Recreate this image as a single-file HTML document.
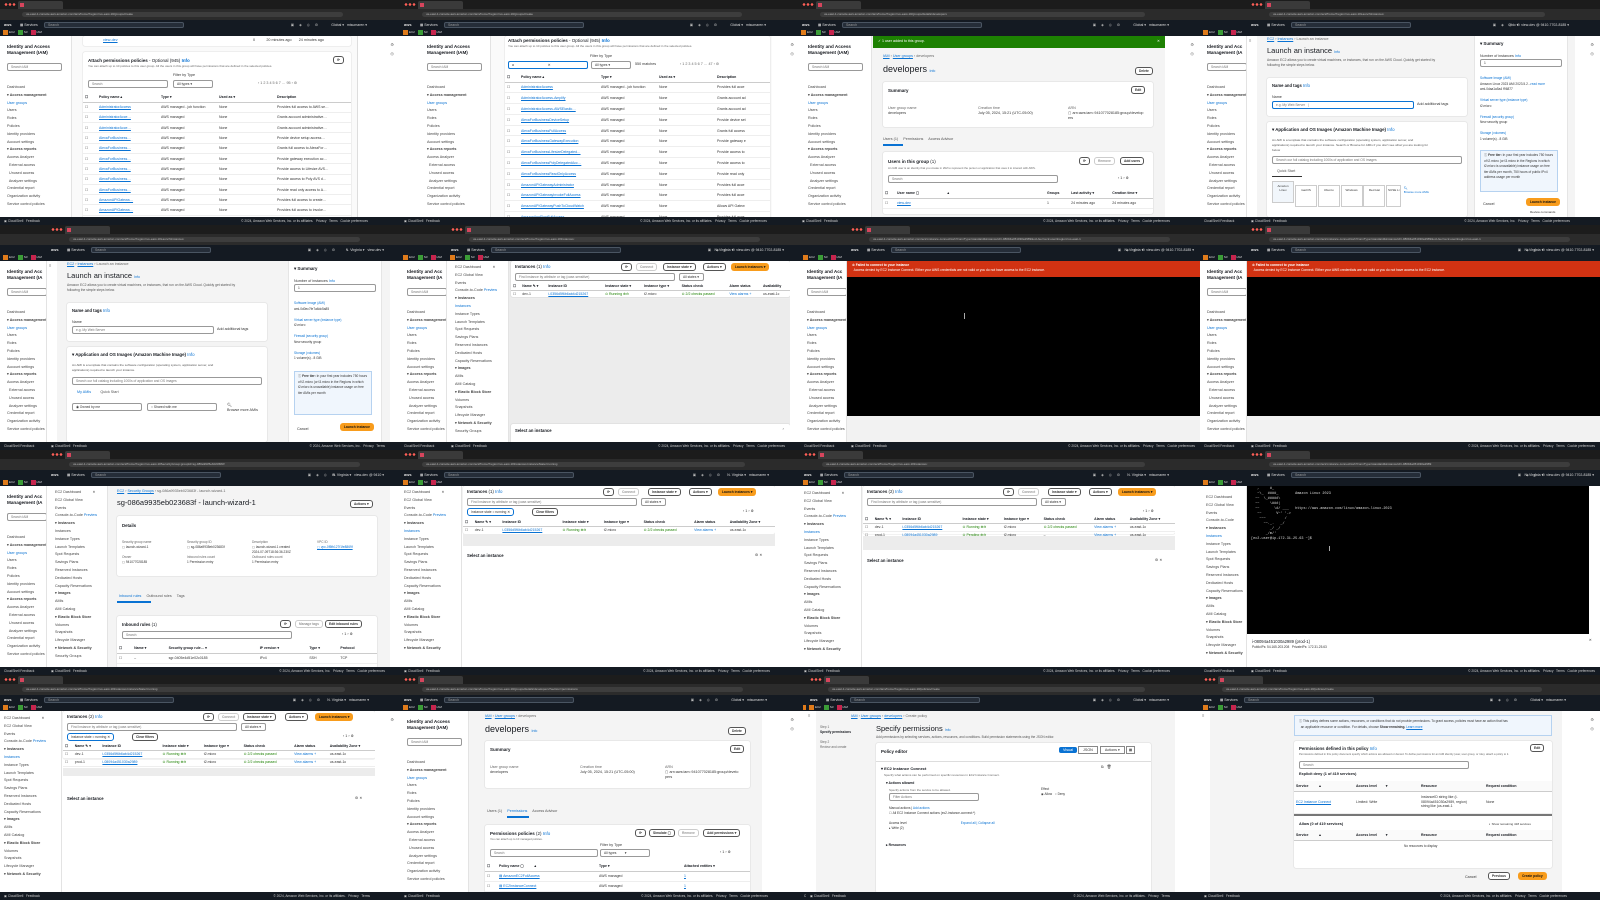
<!DOCTYPE html>
<html><head><meta charset="utf-8">
<style>
*{margin:0;padding:0;box-sizing:border-box}
body{width:1600px;height:900px;overflow:hidden;background:#0d0d0d;font-family:"Liberation Sans",sans-serif;position:relative}
.w{position:absolute;height:225px;overflow:hidden;background:#f4f4f4}
.tb{position:absolute;left:0;right:0;top:0;height:9px;background:#1c1c1c}
.tb .d{position:absolute;left:4px;top:3px;width:12px;height:3px;background:radial-gradient(circle,#ff5f57 1.2px,transparent 1.4px) 0 0/4px 3px repeat-x}
.tb .tab{position:absolute;left:18px;top:1px;width:45px;height:8px;background:#3a3a3a;border-radius:2px 2px 0 0}
.tb .tab:before{content:"";position:absolute;left:2px;top:2px;width:4px;height:4px;background:#d6455d}
.ad{position:absolute;left:0;right:0;top:9px;height:11px;background:#2b2b2b}
.ad .u{position:absolute;left:22px;top:3px;right:30px;height:5px;background:#3d3d3d;border-radius:3px;font-size:3px;color:#bbb;line-height:5px;padding-left:4px;white-space:nowrap;overflow:hidden}
.nv{position:absolute;left:0;right:0;top:20px;height:10px;background:#141a22;font-size:3.5px;color:#ddd;white-space:nowrap}
.nv .aws{position:absolute;left:4px;top:2px;font-weight:bold;font-size:4px}
.nv .sv{position:absolute;left:20px;top:3px}
.nv .se{position:absolute;left:44px;top:2px;width:140px;height:6px;background:#252d38;border:1px solid #4a5562;border-radius:2px;color:#999;padding-left:3px;line-height:4px}
.nv .rg{position:absolute;right:6px;top:3px}
.nv .ic{position:absolute;right:50px;top:3px;letter-spacing:5px;color:#bbb}
.fv{position:absolute;left:0;right:0;top:30px;height:6px;background:#141a22;font-size:3px;color:#ddd}
.fv i{display:inline-block;width:5px;height:5px;vertical-align:top;margin:0 1px 0 3px}
.o{background:#e07b1a}.g{background:#3b9c37}.r{background:#c7254e}
.ct{position:absolute;left:0;right:0;top:36px;bottom:8px;background:#f4f4f4;overflow:hidden}
.ft{position:absolute;left:0;right:0;bottom:0;height:8px;background:#141a22;font-size:3.2px;color:#ccc;line-height:8px;padding-left:4px;white-space:nowrap}
.ft span{position:absolute;right:5px}
.a{position:absolute}
.sb{position:absolute;left:0;top:0;bottom:0;background:#fff;border-right:1px solid #e3e3e3;font-size:3.7px;color:#444;white-space:nowrap;overflow:hidden}
.sbt{position:absolute;left:7px;top:8px;font-size:4.6px;font-weight:bold;color:#16191f;line-height:6px}
.sbs{position:absolute;left:7px;top:27px;width:55px;height:8px;border:1px solid #999;border-radius:2px;font-size:3.3px;color:#777;line-height:6px;padding-left:3px}
.sbl{position:absolute;left:7px;top:48px;line-height:7.8px}
.sbl2{position:absolute;left:6px;top:4px;line-height:7.8px}
.bl{color:#0972d3}
.p{position:absolute;background:#fff;border-radius:2px;box-shadow:0 0 1px #aaa}
.t{font-size:3.7px;color:#333;white-space:nowrap;line-height:5px}
.h{font-weight:bold;color:#16191f}
.lk{color:#0972d3;text-decoration:underline}
.bt{position:absolute;height:8px;border:1px solid #555;border-radius:3px;background:#fff;font-size:3.3px;line-height:6px;padding:0 3px;color:#333;font-weight:bold;white-space:nowrap}
.ob{position:absolute;height:8px;border-radius:3px;background:#f89c1c;font-size:3.3px;line-height:8px;padding:0 4px;color:#111;font-weight:bold;white-space:nowrap}
.in{position:absolute;height:8px;border:1px solid #999;border-radius:2px;background:#fff;font-size:3.3px;line-height:6px;padding-left:3px;color:#777;white-space:nowrap;overflow:hidden}
table{border-collapse:collapse;font-size:3.5px;color:#333;white-space:nowrap}
td{padding:0 2px;border-bottom:1px solid #eee;overflow:hidden}
.hd td{font-weight:bold;color:#16191f;border-bottom:1px solid #ccc}
.blk{background:#000}
.term{font-family:"Liberation Mono",monospace;font-size:3.5px;color:#ddd;white-space:pre;line-height:5px}
.ric{position:absolute;right:6px;top:4px;font-size:4px;color:#666;line-height:9px}
</style></head><body>

<!-- ============ BASE underlying windows ============ -->
<div class="w" style="left:0;top:0;width:400px"><div class="tb"></div><div class="ad"></div><div class="nv"></div><div class="fv"></div><div class="ct" style="background:#fff"><div class="ric">⚙<br>◎</div></div><div class="ft"></div></div>
<div class="w" style="left:400px;top:0;width:400px"><div class="tb"></div><div class="ad"></div><div class="nv"></div><div class="fv"></div><div class="ct" style="background:#fff"><div class="ric">⚙<br>◎</div></div><div class="ft"></div></div>
<div class="w" style="left:800px;top:0;width:400px"><div class="tb"></div><div class="ad"></div><div class="nv"></div><div class="fv"></div><div class="ct" style="background:#fff"><div class="ric">⚙<br>◎</div></div><div class="ft"></div></div>
<div class="w" style="left:400px;top:450px;width:400px"><div class="tb"></div><div class="ad"></div><div class="nv"></div><div class="fv"></div><div class="ct" style="background:#fff"></div><div class="ft"></div></div>
<div class="w" style="left:800px;top:450px;width:400px"><div class="tb"></div><div class="ad"></div><div class="nv"></div><div class="fv"></div><div class="ct" style="background:#fff"></div><div class="ft"></div></div>
<div class="w" style="left:0;top:675px;width:400px"><div class="tb"></div><div class="ad"></div><div class="nv"></div><div class="fv"></div><div class="ct" style="background:#fff"><div class="ric">⚙</div></div><div class="ft"></div></div>
<div class="w" style="left:400px;top:675px;width:400px"><div class="tb"></div><div class="ad"></div><div class="nv"></div><div class="fv"></div><div class="ct" style="background:#fff"><div class="ric">⚙<br>◎</div></div><div class="ft"></div></div>
<div class="w" style="left:1200px;top:675px;width:400px"><div class="tb"></div><div class="ad"></div><div class="nv"></div><div class="fv"></div><div class="ct" style="background:#fff"><div class="ric">⚙<br>◎</div></div><div class="ft"></div></div>

<div class="w" style="left:1200px;top:0;width:400px"><div class="tb"></div><div class="ad"></div><div class="nv"></div><div class="fv"><i class="o"></i>EC2<i class="g"></i>S3<i class="r"></i>IAM</div><div class="ct" style="background:#fff"><div class="sb" style="width:47px"><div class="sbt">Identity and Acc<br>Management (IA</div><div class="sbs" style="width:40px">Search IAM</div><div class="sbl">Dashboard<br><b>▾ Access management</b><br><span class="bl">User groups</span><br>Users<br>Roles<br>Policies<br>Identity providers<br>Account settings<br><b>▾ Access reports</b><br>Access Analyzer<br>&nbsp; External access<br>&nbsp; Unused access<br>&nbsp; Analyzer settings<br>Credential report<br>Organization activity<br>Service control policies</div></div><div class="ric">⚙<br>◎</div></div><div class="ft">CloudShell Feedback</div></div>

<div class="w" style="left:0;top:225px;width:400px"><div class="tb"></div><div class="ad"></div><div class="nv"></div><div class="fv"><i class="o"></i>EC2<i class="g"></i>S3<i class="r"></i>IAM</div><div class="ct" style="background:#fff"><div class="sb" style="width:47px"><div class="sbt">Identity and Acc<br>Management (IA</div><div class="sbs" style="width:40px">Search IAM</div><div class="sbl">Dashboard<br><b>▾ Access management</b><br><span class="bl">User groups</span><br>Users<br>Roles<br>Policies<br>Identity providers<br>Account settings<br><b>▾ Access reports</b><br>Access Analyzer<br>&nbsp; External access<br>&nbsp; Unused access<br>&nbsp; Analyzer settings<br>Credential report<br>Organization activity<br>Service control policies</div></div></div><div class="ft">CloudShell Feedback</div></div>

<div class="w" style="left:400px;top:225px;width:400px"><div class="tb"></div><div class="ad"></div><div class="nv"></div><div class="fv"><i class="o"></i>EC2<i class="g"></i>S3<i class="r"></i>IAM</div><div class="ct" style="background:#fff"><div class="sb" style="width:47px"><div class="sbt">Identity and Acc<br>Management (IA</div><div class="sbs" style="width:40px">Search IAM</div><div class="sbl">Dashboard<br><b>▾ Access management</b><br><span class="bl">User groups</span><br>Users<br>Roles<br>Policies<br>Identity providers<br>Account settings<br><b>▾ Access reports</b><br>Access Analyzer<br>&nbsp; External access<br>&nbsp; Unused access<br>&nbsp; Analyzer settings<br>Credential report<br>Organization activity<br>Service control policies</div></div></div><div class="ft">CloudShell Feedback</div></div>

<div class="w" style="left:800px;top:225px;width:400px"><div class="tb"></div><div class="ad"></div><div class="nv"></div><div class="fv"><i class="o"></i>EC2<i class="g"></i>S3<i class="r"></i>IAM</div><div class="ct" style="background:#fff"><div class="sb" style="width:47px"><div class="sbt">Identity and Acc<br>Management (IA</div><div class="sbs" style="width:40px">Search IAM</div><div class="sbl">Dashboard<br><b>▾ Access management</b><br><span class="bl">User groups</span><br>Users<br>Roles<br>Policies<br>Identity providers<br>Account settings<br><b>▾ Access reports</b><br>Access Analyzer<br>&nbsp; External access<br>&nbsp; Unused access<br>&nbsp; Analyzer settings<br>Credential report<br>Organization activity<br>Service control policies</div></div></div><div class="ft">CloudShell Feedback</div></div>

<div class="w" style="left:1200px;top:225px;width:400px"><div class="tb"></div><div class="ad"></div><div class="nv"></div><div class="fv"><i class="o"></i>EC2<i class="g"></i>S3<i class="r"></i>IAM</div><div class="ct" style="background:#fff"><div class="sb" style="width:47px"><div class="sbt">Identity and Acc<br>Management (IA</div><div class="sbs" style="width:40px">Search IAM</div><div class="sbl">Dashboard<br><b>▾ Access management</b><br><span class="bl">User groups</span><br>Users<br>Roles<br>Policies<br>Identity providers<br>Account settings<br><b>▾ Access reports</b><br>Access Analyzer<br>&nbsp; External access<br>&nbsp; Unused access<br>&nbsp; Analyzer settings<br>Credential report<br>Organization activity<br>Service control policies</div></div></div><div class="ft">CloudShell Feedback</div></div>

<div class="w" style="left:0;top:450px;width:400px"><div class="tb"></div><div class="ad"></div><div class="nv"></div><div class="fv"><i class="o"></i>EC2<i class="g"></i>S3<i class="r"></i>IAM</div><div class="ct" style="background:#fff"><div class="sb" style="width:47px"><div class="sbt">Identity and Acc<br>Management (IA</div><div class="sbs" style="width:40px">Search IAM</div><div class="sbl">Dashboard<br><b>▾ Access management</b><br><span class="bl">User groups</span><br>Users<br>Roles<br>Policies<br>Identity providers<br>Account settings<br><b>▾ Access reports</b><br>Access Analyzer<br>&nbsp; External access<br>&nbsp; Unused access<br>&nbsp; Analyzer settings<br>Credential report<br>Organization activity<br>Service control policies</div></div></div><div class="ft">CloudShell Feedback</div></div>

<div class="w" style="left:1200px;top:450px;width:400px"><div class="tb"></div><div class="ad"></div><div class="nv"></div><div class="fv"><i class="o"></i>EC2<i class="g"></i>S3<i class="r"></i>IAM</div><div class="ct" style="background:#fff"><div class="sb" style="width:47px"><div class="sbl2" style="top:8px">EC2 Dashboard<br>EC2 Global View<br>Events<br>Console-to-Code<br><b>▾ Instances</b><br><span class="bl">Instances</span><br>Instance Types<br>Launch Templates<br>Spot Requests<br>Savings Plans<br>Reserved Instances<br>Dedicated Hosts<br>Capacity Reservations<br><b>▾ Images</b><br>AMIs<br>AMI Catalog<br><b>▾ Elastic Block Store</b><br>Volumes<br>Snapshots<br>Lifecycle Manager<br><b>▾ Network &amp; Security</b></div></div></div><div class="ft">CloudShell Feedback</div></div>

<div class="w" style="left:800px;top:675px;width:400px"><div class="tb"></div><div class="ad"></div><div class="nv"></div><div class="fv"><i class="o"></i>EC2<i class="g"></i>S3<i class="r"></i>IAM</div><div class="ct" style="background:#fff"></div><div class="ft">CloudShell Feedback</div></div>

<!-- ============ ROW 1 ============ -->
<div class="w" style="left:0;top:0;width:373px">
<div class="tb"><div class="d"></div><div class="tab"></div></div><div class="ad"><div class="u">us-east-1.console.aws.amazon.com/iam/home?region=us-east-1#/groups/create</div></div>
<div class="nv"><span class="aws">aws</span><span class="sv">▦ Services</span><span class="se">Search</span><span class="ic">▣◈◎⚙</span><span class="rg">Global ▾ &nbsp; misumaren ▾</span></div>
<div class="fv"><i class="o"></i>EC2<i class="g"></i>S3<i class="r"></i>IAM</div>
<div class="ct" style="background:#fafafa">
<div class="sb" style="width:72px"><div class="sbt">Identity and Access<br>Management (IAM)</div><div class="sbs">Search IAM</div><div class="sbl">Dashboard<br><b>▾ Access management</b><br><span class="bl">User groups</span><br>Users<br>Roles<br>Policies<br>Identity providers<br>Account settings<br><b>▾ Access reports</b><br>Access Analyzer<br>&nbsp; External access<br>&nbsp; Unused access<br>&nbsp; Analyzer settings<br>Credential report<br>Organization activity<br>Service control policies</div></div>
<div class="p" style="left:83px;top:0;width:268px;height:10px"><div class="a t" style="left:20px;top:2px"><span class="lk">view-dev</span></div><div class="a t" style="left:170px;top:2px">0 &nbsp; &nbsp; &nbsp; &nbsp; &nbsp; 20 minutes ago &nbsp; &nbsp; &nbsp; 24 minutes ago</div></div>
<div class="p" style="left:83px;top:16px;width:268px;height:170px">
<div class="a t h" style="left:5px;top:6px;font-size:4.5px">Attach permissions policies <span style="font-weight:normal">- Optional (945)</span> <span class="bl">Info</span></div>
<div class="a t" style="left:5px;top:12px;font-size:3px;color:#666">You can attach up to 10 policies to this user group. All the users in this group will have permissions that are defined in the selected policies.</div>
<div class="bt" style="left:250px;top:4px">⟳</div>
<div class="a t" style="left:90px;top:21px">Filter by Type</div>
<div class="in" style="left:5px;top:28px;width:80px">Search</div>
<div class="in" style="left:90px;top:28px;width:40px;color:#333">All types ▾</div>
<div class="a t" style="left:175px;top:29px;color:#666">‹ 1 2 3 4 5 6 7 … 95 › ⚙</div>
<table class="a" style="left:0;top:40px;width:268px">
<tr class="hd" style="height:10px"><td style="width:14px">☐</td><td style="width:62px">Policy name ▴</td><td style="width:58px">Type ▾</td><td style="width:58px">Used as ▾</td><td>Description</td></tr>
<tr style="height:10.3px"><td>☐</td><td class="lk">AdministratorAccess</td><td>AWS managed - job function</td><td>None</td><td>Provides full access to AWS se…</td></tr>
<tr style="height:10.3px"><td>☐</td><td class="lk">AdministratorAcce…</td><td>AWS managed</td><td>None</td><td>Grants account administrative…</td></tr>
<tr style="height:10.3px"><td>☐</td><td class="lk">AdministratorAcce…</td><td>AWS managed</td><td>None</td><td>Grants account administrative…</td></tr>
<tr style="height:10.3px"><td>☐</td><td class="lk">AlexaForBusiness…</td><td>AWS managed</td><td>None</td><td>Provide device setup access…</td></tr>
<tr style="height:10.3px"><td>☐</td><td class="lk">AlexaForBusiness…</td><td>AWS managed</td><td>None</td><td>Grants full access to AlexaFor…</td></tr>
<tr style="height:10.3px"><td>☐</td><td class="lk">AlexaForBusiness…</td><td>AWS managed</td><td>None</td><td>Provide gateway execution ac…</td></tr>
<tr style="height:10.3px"><td>☐</td><td class="lk">AlexaForBusiness…</td><td>AWS managed</td><td>None</td><td>Provide access to Lifesize AVS…</td></tr>
<tr style="height:10.3px"><td>☐</td><td class="lk">AlexaForBusiness…</td><td>AWS managed</td><td>None</td><td>Provide access to Poly AVS d…</td></tr>
<tr style="height:10.3px"><td>☐</td><td class="lk">AlexaForBusiness…</td><td>AWS managed</td><td>None</td><td>Provide read only access to A…</td></tr>
<tr style="height:10.3px"><td>☐</td><td class="lk">AmazonAPIGatewa…</td><td>AWS managed</td><td>None</td><td>Provides full access to create…</td></tr>
<tr style="height:10.3px"><td>☐</td><td class="lk">AmazonAPIGatewa…</td><td>AWS managed</td><td>None</td><td>Provides full access to invoke…</td></tr>
</table></div>
<div class="a" style="left:357px;top:0;width:16px;bottom:0;background:#fff;border-left:1px solid #ddd"></div>
</div>
<div class="ft">▣ CloudShell &nbsp; Feedback<span>© 2024, Amazon Web Services, Inc. or its affiliates. &nbsp; Privacy &nbsp; Terms &nbsp; Cookie preferences</span></div>
</div>

<div class="w" style="left:400px;top:0;width:372px">
<div class="tb"><div class="d"></div><div class="tab"></div></div><div class="ad"><div class="u">us-east-1.console.aws.amazon.com/iam/home?region=us-east-1#/groups/create</div></div>
<div class="nv"><span class="aws">aws</span><span class="sv">▦ Services</span><span class="se">Search</span><span class="ic">▣◈◎⚙</span><span class="rg">Global ▾ &nbsp; misumaren ▾</span></div>
<div class="fv"><i class="o"></i>EC2<i class="g"></i>S3<i class="r"></i>IAM</div>
<div class="ct" style="background:#fafafa">
<div class="sb" style="width:91px;background:#fff"><div class="sbt" style="left:27px">Identity and Access<br>Management (IAM)</div><div class="sbs" style="left:27px">Search IAM</div><div class="sbl" style="left:27px">Dashboard<br><b>▾ Access management</b><br><span class="bl">User groups</span><br>Users<br>Roles<br>Policies<br>Identity providers<br>Account settings<br><b>▾ Access reports</b><br>Access Analyzer<br>&nbsp; External access<br>&nbsp; Unused access<br>&nbsp; Analyzer settings<br>Credential report<br>Organization activity<br>Service control policies</div></div>
<div class="p" style="left:105px;top:0;width:265px;height:186px">
<div class="a t h" style="left:3px;top:2px;font-size:4.5px">Attach permissions policies <span style="font-weight:normal">- Optional (945)</span> <span class="bl">Info</span></div>
<div class="a t" style="left:3px;top:8px;font-size:3px;color:#666">You can attach up to 10 policies to this user group. All the users in this group will have permissions that are defined in the selected policies.</div>
<div class="a t" style="left:85px;top:18px">Filter by Type</div>
<div class="in" style="left:3px;top:25px;width:80px;color:#333;border-color:#0972d3">a &nbsp; &nbsp; &nbsp; &nbsp; &nbsp; &nbsp; &nbsp; &nbsp; &nbsp; &nbsp; &nbsp; &nbsp; &nbsp; &nbsp; &nbsp; &nbsp; &nbsp; &nbsp; ✕</div>
<div class="in" style="left:86px;top:25px;width:40px;color:#333">All types ▾</div>
<div class="a t" style="left:130px;top:26px">550 matches</div>
<div class="a t" style="left:175px;top:26px;color:#666">‹ 1 2 3 4 5 6 7 … 47 › ⚙</div>
<table class="a" style="left:0;top:36px;width:265px">
<tr class="hd" style="height:10px"><td style="width:14px">☐</td><td style="width:80px">Policy name ▴</td><td style="width:58px">Type ▾</td><td style="width:58px">Used as ▾</td><td>Description</td></tr>
<tr style="height:10.8px"><td>☐</td><td class="lk">AdministratorAccess</td><td>AWS managed - job function</td><td>None</td><td>Provides full acce</td></tr>
<tr style="height:10.8px"><td>☐</td><td class="lk">AdministratorAccess-Amplify</td><td>AWS managed</td><td>None</td><td>Grants account ad</td></tr>
<tr style="height:10.8px"><td>☐</td><td class="lk">AdministratorAccess-AWSElastic…</td><td>AWS managed</td><td>None</td><td>Grants account ad</td></tr>
<tr style="height:10.8px"><td>☐</td><td class="lk">AlexaForBusinessDeviceSetup</td><td>AWS managed</td><td>None</td><td>Provide device set</td></tr>
<tr style="height:10.8px"><td>☐</td><td class="lk">AlexaForBusinessFullAccess</td><td>AWS managed</td><td>None</td><td>Grants full access</td></tr>
<tr style="height:10.8px"><td>☐</td><td class="lk">AlexaForBusinessGatewayExecution</td><td>AWS managed</td><td>None</td><td>Provide gateway e</td></tr>
<tr style="height:10.8px"><td>☐</td><td class="lk">AlexaForBusinessLifesizeDelegated…</td><td>AWS managed</td><td>None</td><td>Provide access to</td></tr>
<tr style="height:10.8px"><td>☐</td><td class="lk">AlexaForBusinessPolyDelegatedAcc…</td><td>AWS managed</td><td>None</td><td>Provide access to</td></tr>
<tr style="height:10.8px"><td>☐</td><td class="lk">AlexaForBusinessReadOnlyAccess</td><td>AWS managed</td><td>None</td><td>Provide read only</td></tr>
<tr style="height:10.8px"><td>☐</td><td class="lk">AmazonAPIGatewayAdministrator</td><td>AWS managed</td><td>None</td><td>Provides full acce</td></tr>
<tr style="height:10.8px"><td>☐</td><td class="lk">AmazonAPIGatewayInvokeFullAccess</td><td>AWS managed</td><td>None</td><td>Provides full acce</td></tr>
<tr style="height:10.8px"><td>☐</td><td class="lk">AmazonAPIGatewayPushToCloudWatch</td><td>AWS managed</td><td>None</td><td>Allows API Gatew</td></tr>
<tr style="height:10.8px"><td>☐</td><td class="lk">AmazonAppFlowFullAccess</td><td>AWS managed</td><td>None</td><td>Provides full acce</td></tr>
</table></div>
</div>
<div class="ft">▣ CloudShell &nbsp; Feedback<span>© 2024, Amazon Web Services, Inc. or its affiliates. &nbsp; Privacy &nbsp; Terms &nbsp; Cookie preferences</span></div>
</div>

<div class="w" style="left:798px;top:0;width:377px">
<div class="tb"><div class="d"></div><div class="tab"></div></div><div class="ad"><div class="u">us-east-1.console.aws.amazon.com/iam/home?region=us-east-1#/groups/details/developers</div></div>
<div class="nv"><span class="aws">aws</span><span class="sv">▦ Services</span><span class="se">Search</span><span class="ic">▣◈◎⚙</span><span class="rg">Global ▾ &nbsp; misumaren ▾</span></div>
<div class="fv"><i class="o"></i>EC2<i class="g"></i>S3<i class="r"></i>IAM</div>
<div class="ct" style="background:#f4f4f4">
<div class="sb" style="width:74px"><div class="sbt" style="left:10px">Identity and Access<br>Management (IAM)</div><div class="sbs" style="left:10px">Search IAM</div><div class="sbl" style="left:10px">Dashboard<br><b>▾ Access management</b><br><span class="bl">User groups</span><br>Users<br>Roles<br>Policies<br>Identity providers<br>Account settings<br><b>▾ Access reports</b><br>Access Analyzer<br>&nbsp; External access<br>&nbsp; Unused access<br>&nbsp; Analyzer settings<br>Credential report<br>Organization activity<br>Service control policies</div></div>
<div class="a t" style="left:75px;top:0;width:292px;height:12px;background:#1d8102;color:#fff;padding:3px 5px;font-size:3.6px">✓ 1 user added to this group. <span style="position:absolute;right:5px">✕</span></div>
<div class="a t" style="left:85px;top:18px;color:#666"><span class="lk">IAM</span> › <span class="lk">User groups</span> › developers</div>
<div class="a h" style="left:85px;top:28px;font-size:9px;font-weight:normal">developers <span class="bl" style="font-size:3.5px">Info</span></div>
<div class="bt" style="left:337px;top:31px">Delete</div>
<div class="p" style="left:85px;top:46px;width:270px;height:45px">
<div class="a t h" style="left:5px;top:6px;font-size:4.5px">Summary</div><div class="bt" style="left:248px;top:4px">Edit</div>
<div class="a t" style="left:5px;top:24px;color:#666">User group name<br><span style="color:#333">developers</span></div>
<div class="a t" style="left:95px;top:24px;color:#666">Creation time<br><span style="color:#333">July 05, 2024, 15:21 (UTC-05:00)</span></div>
<div class="a t" style="left:185px;top:24px;color:#666">ARN<br><span style="color:#333">▢ arn:aws:iam::941077028185:group/develop<br>ers</span></div></div>
<div class="a t" style="left:85px;top:101px;color:#555">Users (1) &nbsp; &nbsp; Permissions &nbsp; &nbsp; Access Advisor</div>
<div class="a" style="left:85px;top:108px;width:20px;height:1.5px;background:#0972d3"></div>
<div class="p" style="left:85px;top:116px;width:270px;height:62px">
<div class="a t h" style="left:5px;top:7px;font-size:4.5px">Users in this group <span style="font-weight:normal">(1)</span></div>
<div class="a t" style="left:5px;top:14px;font-size:2.8px;color:#666">An IAM user is an identity that you create in IAM to represent the person or application that uses it to interact with AWS.</div>
<div class="bt" style="left:196px;top:5px">⟳</div><div class="bt" style="left:211px;top:5px;color:#999;border-color:#ccc">Remove</div><div class="bt" style="left:237px;top:5px">Add users</div>
<div class="in" style="left:5px;top:23px;width:170px">Search</div>
<div class="a t" style="left:235px;top:24px">‹ 1 › ⚙</div>
<table class="a" style="left:0;top:36px;width:270px"><tr class="hd" style="height:10px"><td style="width:12px">☐</td><td style="width:150px">User name ▢ &nbsp; &nbsp; &nbsp; &nbsp; &nbsp; &nbsp; &nbsp; &nbsp; &nbsp; &nbsp; &nbsp; &nbsp; &nbsp; &nbsp; ▴</td><td>Groups</td><td>Last activity ▾</td><td>Creation time ▾</td></tr>
<tr style="height:10px"><td>☐</td><td class="lk">view-dev</td><td>1</td><td>24 minutes ago</td><td>24 minutes ago</td></tr></table></div>
<div class="a" style="left:367px;top:0;width:10px;bottom:0;background:#fff"></div>
</div>
<div class="ft">▣ CloudShell &nbsp; Feedback<span>© 2024, Amazon Web Services, Inc. or its affiliates. &nbsp; Privacy &nbsp; Terms &nbsp; Cookie preferences</span></div>
</div>

<div class="w" style="left:1247px;top:0;width:328px">
<div class="tb"><div class="d"></div><div class="tab"></div></div><div class="ad"><div class="u">us-east-1.console.aws.amazon.com/ec2/home?region=us-east-1#LaunchInstances:</div></div>
<div class="nv"><span class="aws">aws</span><span class="sv">▦ Services</span><span class="se" style="width:120px">Search</span><span class="ic">▣◈◎⚙</span><span class="rg">Ohio ▾ &nbsp; view-dev @ 9410-7702-8185 ▾</span></div>
<div class="fv"></div>
<div class="ct" style="background:#f4f4f4">
<div class="a" style="left:0;top:0;width:10px;bottom:0;background:#fff;font-size:4px;color:#555;padding:2px">≡</div>
<div class="a t" style="left:20px;top:1px;color:#666"><span class="lk">EC2</span> › <span class="lk">Instances</span> › Launch an instance</div>
<div class="a h" style="left:20px;top:10px;font-size:7.5px;font-weight:normal">Launch an instance <span class="bl" style="font-size:3.5px">Info</span></div>
<div class="a t" style="left:20px;top:22px;font-size:3.3px;color:#555">Amazon EC2 allows you to create virtual machines, or instances, that run on the AWS Cloud. Quickly get started by<br>following the simple steps below.</div>
<div class="p" style="left:20px;top:42px;width:200px;height:38px"><div class="a t h" style="left:5px;top:5px;font-size:4.2px">Name and tags <span class="bl" style="font-weight:normal">Info</span></div><div class="a t" style="left:5px;top:17px">Name</div><div class="in" style="left:5px;top:23px;width:142px;border-color:#0972d3">e.g. My Web Server &nbsp; |</div><div class="a t bl" style="left:150px;top:24px">Add additional tags</div></div>
<div class="p" style="left:20px;top:86px;width:200px;height:95px"><div class="a t h" style="left:5px;top:5px;font-size:4.4px">▾ Application and OS Images (Amazon Machine Image) <span class="bl" style="font-weight:normal">Info</span></div>
<div class="a t" style="left:5px;top:16px;font-size:3.1px;color:#555">An AMI is a template that contains the software configuration (operating system, application server, and<br>applications) required to launch your instance. Search or Browse for AMIs if you don't see what you are looking for<br>below</div>
<div class="in" style="left:5px;top:34px;width:190px">Search our full catalog including 1000s of application and OS images</div>
<div class="a t" style="left:10px;top:47px;color:#555">Quick Start</div><div class="a" style="left:5px;top:54px;width:30px;height:1px;background:#333"></div>
<div class="a t" style="left:5px;top:59px;font-size:3px;line-height:4px">
<span style="display:inline-block;width:22px;height:22px;border:1px solid #ccc;background:#f1f6fb;text-align:center;padding-top:2px">Amazon<br>Linux</span> <span style="display:inline-block;width:22px;height:22px;border:1px solid #ccc;text-align:center;padding-top:2px">macOS</span> <span style="display:inline-block;width:22px;height:22px;border:1px solid #ccc;text-align:center;padding-top:2px">Ubuntu</span> <span style="display:inline-block;width:22px;height:22px;border:1px solid #ccc;text-align:center;padding-top:2px">Windows</span> <span style="display:inline-block;width:22px;height:22px;border:1px solid #ccc;text-align:center;padding-top:2px">Red Hat</span> <span style="display:inline-block;width:15px;height:22px;border:1px solid #ccc;text-align:center;padding-top:2px">SUSE Li</span> &nbsp; <span class="bl" style="display:inline-block;vertical-align:top;padding-top:5px">🔍︎<br>Browse more AMIs</span></div></div>
<div class="a" style="left:228px;top:0;width:92px;bottom:0;background:#fff;box-shadow:0 0 1px #aaa">
<div class="a t h" style="left:5px;top:5px;font-size:4.4px">▾ Summary</div>
<div class="a t" style="left:5px;top:18px">Number of instances <span class="bl">Info</span></div>
<div class="in" style="left:5px;top:23px;width:82px;color:#333">1</div>
<div class="a t" style="left:5px;top:40px;font-size:3.2px;line-height:5.5px"><span class="bl">Software Image (AMI)</span><br>Amazon Linux 2023 AMI 2023.5.2...<span class="bl">read more</span><br>ami-0daa1a5a4 f96877<br><br><span class="bl">Virtual server type (instance type)</span><br>t2.micro<br><br><span class="bl">Firewall (security group)</span><br>New security group<br><br><span class="bl">Storage (volumes)</span><br>1 volume(s) - 8 GiB</div>
<div class="a t" style="left:5px;top:114px;width:78px;height:42px;background:#f0f6fd;border:1px solid #b6d2f0;font-size:3.2px;line-height:5.5px;padding:2px 3px;white-space:normal">ⓘ <b>Free tier:</b> In your first year includes 750 hours of t2.micro (or t3.micro in the Regions in which t2.micro is unavailable) instance usage on free tier AMIs per month, 750 hours of public IPv4 address usage per month</div>
<div class="a t" style="left:8px;top:166px">Cancel</div><div class="ob" style="left:51px;top:162px">Launch instance</div><div class="a t bl" style="left:55px;top:174px;font-size:3px">Review commands</div>
</div></div>
<div class="ft">▣ CloudShell &nbsp; Feedback<span>© 2024, Amazon Web Services, Inc. &nbsp; Privacy &nbsp; Terms &nbsp; Cookie preferences</span></div>
</div>

<!-- ============ ROW 2 ============ -->
<div class="w" style="left:47px;top:225px;width:343px">
<div class="tb"><div class="d"></div><div class="tab"></div></div><div class="ad"><div class="u">us-east-1.console.aws.amazon.com/ec2/home?region=us-east-1#LaunchInstances:</div></div>
<div class="nv"><span class="aws">aws</span><span class="sv">▦ Services</span><span class="se" style="width:120px">Search</span><span class="ic">▣◈◎⚙</span><span class="rg">N. Virginia ▾ &nbsp; view-dev ▾</span></div>
<div class="fv"></div>
<div class="ct" style="background:#f4f4f4">
<div class="a" style="left:0;top:0;width:10px;bottom:0;background:#fff;font-size:4px;color:#555;padding:2px">≡</div>
<div class="a t" style="left:20px;top:1px;color:#666"><span class="lk">EC2</span> › <span class="lk">Instances</span> › Launch an instance</div>
<div class="a h" style="left:20px;top:10px;font-size:7.5px;font-weight:normal">Launch an instance <span class="bl" style="font-size:3.5px">Info</span></div>
<div class="a t" style="left:20px;top:22px;font-size:3.3px;color:#555">Amazon EC2 allows you to create virtual machines, or instances, that run on the AWS Cloud. Quickly get started by<br>following the simple steps below.</div>
<div class="p" style="left:20px;top:42px;width:200px;height:38px"><div class="a t h" style="left:5px;top:5px;font-size:4.2px">Name and tags <span class="bl" style="font-weight:normal">Info</span></div><div class="a t" style="left:5px;top:17px">Name</div><div class="in" style="left:5px;top:23px;width:142px">e.g. My Web Server</div><div class="a t bl" style="left:150px;top:24px">Add additional tags</div></div>
<div class="p" style="left:20px;top:86px;width:200px;height:95px"><div class="a t h" style="left:5px;top:5px;font-size:4.4px">▾ Application and OS Images (Amazon Machine Image) <span class="bl" style="font-weight:normal">Info</span></div>
<div class="a t" style="left:5px;top:16px;font-size:3.1px;color:#555">An AMI is a template that contains the software configuration (operating system, application server, and<br>applications) required to launch your instance.</div>
<div class="in" style="left:5px;top:30px;width:190px">Search our full catalog including 1000s of application and OS images</div>
<div class="a t" style="left:10px;top:43px;color:#0972d3">My AMIs &nbsp; &nbsp; &nbsp; &nbsp; <span style="color:#555">Quick Start</span></div>
<div class="in" style="left:5px;top:56px;width:70px;color:#333">◉ Owned by me</div><div class="in" style="left:80px;top:56px;width:70px;color:#333">○ Shared with me</div>
<div class="a t bl" style="left:160px;top:56px">🔍︎<br>Browse more AMIs</div></div>
<div class="a" style="left:242px;top:0;width:92px;bottom:0;background:#fff;box-shadow:0 0 1px #aaa">
<div class="a t h" style="left:5px;top:5px;font-size:4.4px">▾ Summary</div>
<div class="a t" style="left:5px;top:18px">Number of instances <span class="bl">Info</span></div>
<div class="in" style="left:5px;top:23px;width:82px;color:#333">1</div>
<div class="a t" style="left:5px;top:40px;font-size:3.2px;line-height:5.5px"><span class="bl">Software Image (AMI)</span><br>ami-0d0ec7fe7a6dc5a85<br><br><span class="bl">Virtual server type (instance type)</span><br>t2.micro<br><br><span class="bl">Firewall (security group)</span><br>New security group<br><br><span class="bl">Storage (volumes)</span><br>1 volume(s) - 8 GiB</div>
<div class="a t" style="left:5px;top:110px;width:78px;height:44px;background:#f0f6fd;border:1px solid #b6d2f0;font-size:3.2px;line-height:5.5px;padding:2px 3px;white-space:normal">ⓘ <b>Free tier:</b> In your first year includes 750 hours of t2.micro (or t3.micro in the Regions in which t2.micro is unavailable) instance usage on free tier AMIs per month</div>
<div class="a t" style="left:8px;top:166px">Cancel</div><div class="ob" style="left:51px;top:162px">Launch instance</div>
</div></div>
<div class="ft">▣ CloudShell &nbsp; Feedback<span>© 2024, Amazon Web Services, Inc. &nbsp; Privacy &nbsp; Terms</span></div>
</div>

<div class="w" style="left:447px;top:225px;width:343px">
<div class="tb"><div class="d"></div><div class="tab"></div></div><div class="ad"><div class="u">us-east-1.console.aws.amazon.com/ec2/home?region=us-east-1#Instances:</div></div>
<div class="nv"><span class="aws">aws</span><span class="sv">▦ Services</span><span class="se" style="width:130px">Search</span><span class="ic">▣◈◎⚙</span><span class="rg">N. Virginia ▾ &nbsp; view-dev @ 9410-7702-8185 ▾</span></div>
<div class="fv"><i class="o"></i>EC2<i class="g"></i>S3<i class="r"></i>IAM</div>
<div class="ct" style="background:#ececec">
<div class="sb" style="width:62px"><div class="sbl2" style="left:8px;top:3px">EC2 Dashboard &nbsp; &nbsp; &nbsp; &nbsp; &nbsp; ✕<br>EC2 Global View<br>Events<br>Console-to-Code <span class="bl">Preview</span><br><b>▾ Instances</b><br><span class="bl">Instances</span><br>Instance Types<br>Launch Templates<br>Spot Requests<br>Savings Plans<br>Reserved Instances<br>Dedicated Hosts<br>Capacity Reservations<br><b>▾ Images</b><br>AMIs<br>AMI Catalog<br><b>▾ Elastic Block Store</b><br>Volumes<br>Snapshots<br>Lifecycle Manager<br><b>▾ Network &amp; Security</b><br>Security Groups</div></div>
<div class="p" style="left:64px;top:0;width:279px;height:36px">
<div class="a t h" style="left:4px;top:3px;font-size:4.4px">Instances <span style="font-weight:normal">(1)</span> <span class="bl" style="font-weight:normal">Info</span></div>
<div class="bt" style="left:110px;top:2px">⟳</div><div class="bt" style="left:125px;top:2px;color:#999;border-color:#ccc">Connect</div><div class="bt" style="left:152px;top:2px">Instance state ▾</div><div class="bt" style="left:192px;top:2px">Actions ▾</div><div class="ob" style="left:220px;top:2px">Launch instances ▾</div>
<div class="in" style="left:4px;top:12px;width:160px">Find Instance by attribute or tag (case-sensitive)</div><div class="in" style="left:168px;top:12px;width:25px;color:#333">All states ▾</div>
<table class="a" style="left:0;top:21px;width:279px"><tr class="hd" style="height:8px"><td>☐</td><td>Name ✎ ▾</td><td>Instance ID</td><td>Instance state ▾</td><td>Instance type ▾</td><td>Status check</td><td>Alarm status</td><td>Availability</td></tr>
<tr style="height:8px"><td>☐</td><td>dev-1</td><td class="lk">i-0356d5f6b6ab4d215267</td><td style="color:#1d8102">⊙ Running ⊕⊖</td><td>t2.micro</td><td style="color:#1d8102">⊙ 2/2 checks passed</td><td class="bl">View alarms +</td><td>us-east-1c</td></tr></table></div>
<div class="p" style="left:64px;top:163px;width:279px;height:20px"><div class="a t h" style="left:4px;top:4px;font-size:4.2px">Select an instance</div><div class="a t" style="right:5px;top:4px">⌃</div></div>
</div>
<div class="ft">▣ CloudShell &nbsp; Feedback<span>© 2024, Amazon Web Services, Inc. or its affiliates. &nbsp; Privacy &nbsp; Terms &nbsp; Cookie preferences</span></div>
</div>

<div class="w" style="left:847px;top:225px;width:353px">
<div class="tb"><div class="d"></div><div class="tab"></div></div><div class="ad"><div class="u">us-east-1.console.aws.amazon.com/ec2-instance-connect/ssh?connType=standard&amp;instanceId=i-08094a451030a2989&amp;osUser=ec2-user&amp;region=us-east-1</div></div>
<div class="nv"><span class="aws">aws</span><span class="sv">▦ Services</span><span class="se" style="width:130px">Search</span><span class="ic">▣◈◎⚙</span><span class="rg">N. Virginia ▾ &nbsp; view-dev @ 9410-7702-8185 ▾</span></div>
<div class="fv"></div>
<div class="ct blk">
<div class="a t" style="left:0;top:0;right:0;height:16px;background:#d13212;color:#fff;padding:2px 5px;font-size:3.3px">⊗ <b>Failed to connect to your instance</b><br>&nbsp; Access denied by EC2 Instance Connect. Either your AWS credentials are not valid or you do not have access to the EC2 instance.</div>
<div class="a" style="left:117px;top:52px;width:1px;height:6px;background:#aaa"></div>
<div class="a" style="left:0;right:0;top:155px;bottom:0;background:#f2f2f2"></div>
</div>
<div class="ft">▣ CloudShell &nbsp; Feedback<span>© 2024, Amazon Web Services, Inc. or its affiliates. &nbsp; Privacy &nbsp; Terms &nbsp; Cookie preferences</span></div>
</div>

<div class="w" style="left:1247px;top:225px;width:353px">
<div class="tb"><div class="d"></div><div class="tab"></div></div><div class="ad"><div class="u">us-east-1.console.aws.amazon.com/ec2-instance-connect/ssh?connType=standard&amp;instanceId=i-08094a451030a2989&amp;osUser=ec2-user&amp;region=us-east-1</div></div>
<div class="nv"><span class="aws">aws</span><span class="sv">▦ Services</span><span class="se" style="width:130px">Search</span><span class="ic">▣◈◎⚙</span><span class="rg">N. Virginia ▾ &nbsp; view-dev @ 9410-7702-8185 ▾</span></div>
<div class="fv"></div>
<div class="ct blk">
<div class="a t" style="left:0;top:0;right:0;height:16px;background:#d13212;color:#fff;padding:2px 5px;font-size:3.3px">⊗ <b>Failed to connect to your instance</b><br>&nbsp; Access denied by EC2 Instance Connect. Either your AWS credentials are not valid or you do not have access to the EC2 instance.</div>
<div class="a" style="left:0;right:0;top:155px;bottom:0;background:#f2f2f2"></div>
</div>
<div class="ft">▣ CloudShell &nbsp; Feedback<span>© 2024, Amazon Web Services, Inc. or its affiliates. &nbsp; Privacy &nbsp; Terms &nbsp; Cookie preferences</span></div>
</div>

<!-- ============ ROW 3 ============ -->
<div class="w" style="left:47px;top:450px;width:343px">
<div class="tb"><div class="d"></div><div class="tab"></div></div><div class="ad"><div class="u">us-east-1.console.aws.amazon.com/ec2/home?region=us-east-1#SecurityGroup:groupId=sg-086a9935eb023683f</div></div>
<div class="nv"><span class="aws">aws</span><span class="sv">▦ Services</span><span class="se" style="width:130px">Search</span><span class="ic">▣◈◎⚙</span><span class="rg">N. Virginia ▾ &nbsp; view-dev @ 9410 ▾</span></div>
<div class="fv"></div>
<div class="ct" style="background:#f4f4f4">
<div class="sb" style="width:61px"><div class="sbl2" style="left:8px;top:3px">EC2 Dashboard &nbsp; &nbsp; &nbsp; &nbsp; &nbsp; ✕<br>EC2 Global View<br>Events<br>Console-to-Code <span class="bl">Preview</span><br><b>▾ Instances</b><br>Instances<br>Instance Types<br>Launch Templates<br>Spot Requests<br>Savings Plans<br>Reserved Instances<br>Dedicated Hosts<br>Capacity Reservations<br><b>▾ Images</b><br>AMIs<br>AMI Catalog<br><b>▾ Elastic Block Store</b><br>Volumes<br>Snapshots<br>Lifecycle Manager<br><b>▾ Network &amp; Security</b><br>Security Groups</div></div>
<div class="a t" style="left:70px;top:3px;color:#666"><span class="lk">EC2</span> › <span class="lk">Security Groups</span> › sg-086a9935eb023683f - launch-wizard-1</div>
<div class="a h" style="left:70px;top:12px;font-size:7.5px;font-weight:normal">sg-086a9935eb023683f - launch-wizard-1</div>
<div class="bt" style="left:303px;top:14px">Actions ▾</div>
<div class="p" style="left:70px;top:30px;width:260px;height:60px">
<div class="a t h" style="left:5px;top:7px;font-size:4.3px">Details</div>
<div class="a t" style="left:5px;top:24px;font-size:3.2px;color:#666">Security group name<br><span style="color:#333">▢ launch-wizard-1</span><br><br>Owner<br><span style="color:#333">▢ 941077028185</span></div>
<div class="a t" style="left:70px;top:24px;font-size:3.2px;color:#666">Security group ID<br><span style="color:#333">▢ sg-086a9935eb023683f</span><br><br>Inbound rules count<br><span style="color:#333">1 Permission entry</span></div>
<div class="a t" style="left:135px;top:24px;font-size:3.2px;color:#666">Description<br><span style="color:#333">▢ launch-wizard-1 created<br>2024-07-09T18:36:36.230Z</span><br>Outbound rules count<br><span style="color:#333">1 Permission entry</span></div>
<div class="a t" style="left:200px;top:24px;font-size:3.2px;color:#666">VPC ID<br><span class="lk">▢ vpc-0f5fb127f1fe8869f</span></div></div>
<div class="a t" style="left:72px;top:108px;color:#0972d3">Inbound rules &nbsp; &nbsp; <span style="color:#555">Outbound rules &nbsp; &nbsp; Tags</span></div>
<div class="a" style="left:70px;top:115px;width:34px;height:1.5px;background:#0972d3"></div>
<div class="p" style="left:70px;top:130px;width:260px;height:52px">
<div class="a t h" style="left:5px;top:6px;font-size:4.3px">Inbound rules <span style="font-weight:normal">(1)</span></div>
<div class="bt" style="left:163px;top:4px">⟳</div><div class="bt" style="left:178px;top:4px;color:#999;border-color:#ccc">Manage tags</div><div class="bt" style="left:208px;top:4px">Edit inbound rules</div>
<div class="in" style="left:5px;top:15px;width:170px">Search</div><div class="a t" style="left:225px;top:16px">‹ 1 › ⚙</div>
<table class="a" style="left:0;top:27px;width:260px"><tr class="hd" style="height:10px"><td>☐</td><td>Name ▾</td><td>Security group rule… ▾</td><td>IP version ▾</td><td>Type ▾</td><td>Protocol</td></tr>
<tr style="height:10px"><td>☐</td><td>–</td><td>sgr-0405e4d51e02c0185</td><td>IPv4</td><td>SSH</td><td>TCP</td></tr></table></div>
</div>
<div class="ft">▣ CloudShell &nbsp; Feedback<span>© 2024, Amazon Web Services, Inc. &nbsp; Privacy &nbsp; Terms &nbsp; Cookie preferences</span></div>
</div>

<div class="w" style="left:400px;top:450px;width:375px">
<div class="tb"><div class="d"></div><div class="tab"></div></div><div class="ad"><div class="u">us-east-1.console.aws.amazon.com/ec2/home?region=us-east-1#Instances:instanceState=running</div></div>
<div class="nv"><span class="aws">aws</span><span class="sv">▦ Services</span><span class="se" style="width:130px">Search</span><span class="ic">▣◈◎⚙</span><span class="rg">N. Virginia ▾ &nbsp; misumaren ▾</span></div>
<div class="fv"><i class="o"></i>EC2<i class="g"></i>S3<i class="r"></i>IAM</div>
<div class="ct" style="background:#fff">
<div class="sb" style="width:62px"><div class="sbl2" style="left:4px;top:3px">EC2 Dashboard &nbsp; &nbsp; &nbsp; &nbsp; &nbsp; ✕<br>EC2 Global View<br>Events<br>Console-to-Code <span class="bl">Preview</span><br><b>▾ Instances</b><br><span class="bl">Instances</span><br>Instance Types<br>Launch Templates<br>Spot Requests<br>Savings Plans<br>Reserved Instances<br>Dedicated Hosts<br>Capacity Reservations<br><b>▾ Images</b><br>AMIs<br>AMI Catalog<br><b>▾ Elastic Block Store</b><br>Volumes<br>Snapshots<br>Lifecycle Manager<br><b>▾ Network &amp; Security</b></div></div>
<div class="p" style="left:63px;top:0;width:312px;height:48px">
<div class="a t h" style="left:4px;top:3px;font-size:4.4px">Instances <span style="font-weight:normal">(1)</span> <span class="bl" style="font-weight:normal">Info</span></div>
<div class="bt" style="left:140px;top:2px">⟳</div><div class="bt" style="left:155px;top:2px;color:#999;border-color:#ccc">Connect</div><div class="bt" style="left:185px;top:2px">Instance state ▾</div><div class="bt" style="left:226px;top:2px">Actions ▾</div><div class="ob" style="left:255px;top:2px">Launch instances ▾</div>
<div class="in" style="left:4px;top:12px;width:170px">Find Instance by attribute or tag (case-sensitive)</div><div class="in" style="left:178px;top:12px;width:25px;color:#333">All states ▾</div>
<div class="bt" style="left:4px;top:22px;font-weight:normal;border-color:#0972d3">Instance state = running ✕</div><div class="bt" style="left:69px;top:22px">Clear filters</div><div class="a t" style="left:280px;top:23px">‹ 1 › ⚙</div>
<table class="a" style="left:0;top:32px;width:312px"><tr class="hd" style="height:8px"><td>☐</td><td>Name ✎ ▾</td><td>Instance ID</td><td>Instance state ▾</td><td>Instance type ▾</td><td>Status check</td><td>Alarm status</td><td>Availability Zone ▾</td></tr>
<tr style="height:8px"><td>☐</td><td>dev-1</td><td class="lk">i-0356d5f6b6ab4d215267</td><td style="color:#1d8102">⊙ Running ⊕⊖</td><td>t2.micro</td><td style="color:#1d8102">⊙ 2/2 checks passed</td><td class="bl">View alarms +</td><td>us-east-1c</td></tr></table></div>
<div class="a" style="left:63px;top:48px;width:312px;height:12px;background:#ececec"></div>
<div class="a t h" style="left:67px;top:67px;font-size:4.2px">Select an instance</div><div class="a t" style="left:355px;top:67px">⚙ ✕</div>
</div>
<div class="ft">▣ CloudShell &nbsp; Feedback<span>© 2024, Amazon Web Services, Inc. or its affiliates. &nbsp; Privacy &nbsp; Terms &nbsp; Cookie preferences</span></div>
</div>

<div class="w" style="left:800px;top:450px;width:375px">
<div class="tb"><div class="d"></div><div class="tab"></div></div><div class="ad"><div class="u">us-east-1.console.aws.amazon.com/ec2/home?region=us-east-1#Instances:</div></div>
<div class="nv"><span class="aws">aws</span><span class="sv">▦ Services</span><span class="se" style="width:130px">Search</span><span class="ic">▣◈◎⚙</span><span class="rg">N. Virginia ▾ &nbsp; misumaren ▾</span></div>
<div class="fv"><i class="o"></i>EC2<i class="g"></i>S3<i class="r"></i>IAM</div>
<div class="ct" style="background:#fff">
<div class="sb" style="width:62px"><div class="sbl2" style="left:4px;top:4px">EC2 Dashboard &nbsp; &nbsp; &nbsp; &nbsp; &nbsp; ✕<br>EC2 Global View<br>Events<br>Console-to-Code <span class="bl">Preview</span><br><b>▾ Instances</b><br><span class="bl">Instances</span><br>Instance Types<br>Launch Templates<br>Spot Requests<br>Savings Plans<br>Reserved Instances<br>Dedicated Hosts<br>Capacity Reservations<br><b>▾ Images</b><br>AMIs<br>AMI Catalog<br><b>▾ Elastic Block Store</b><br>Volumes<br>Snapshots<br>Lifecycle Manager<br><b>▾ Network &amp; Security</b></div></div>
<div class="p" style="left:63px;top:0;width:312px;height:48px">
<div class="a t h" style="left:4px;top:3px;font-size:4.4px">Instances <span style="font-weight:normal">(2)</span> <span class="bl" style="font-weight:normal">Info</span></div>
<div class="bt" style="left:140px;top:2px">⟳</div><div class="bt" style="left:155px;top:2px;color:#999;border-color:#ccc">Connect</div><div class="bt" style="left:185px;top:2px">Instance state ▾</div><div class="bt" style="left:226px;top:2px">Actions ▾</div><div class="ob" style="left:255px;top:2px">Launch instances ▾</div>
<div class="in" style="left:4px;top:12px;width:170px">Find Instance by attribute or tag (case-sensitive)</div><div class="in" style="left:178px;top:12px;width:25px;color:#333">All states ▾</div>
<div class="a t" style="left:280px;top:23px">‹ 1 › ⚙</div>
<table class="a" style="left:0;top:29px;width:312px"><tr class="hd" style="height:8px"><td>☐</td><td>Name ✎ ▾</td><td>Instance ID</td><td>Instance state ▾</td><td>Instance type ▾</td><td>Status check</td><td>Alarm status</td><td>Availability Zone ▾</td></tr>
<tr style="height:8px"><td>☐</td><td>dev-1</td><td class="lk">i-0356d5f6b6ab4d215267</td><td style="color:#1d8102">⊙ Running ⊕⊖</td><td>t2.micro</td><td style="color:#1d8102">⊙ 2/2 checks passed</td><td class="bl">View alarms +</td><td>us-east-1c</td></tr>
<tr style="height:8px"><td>☐</td><td>prod-1</td><td class="lk">i-08094a451030a2989</td><td style="color:#1d8102">⊙ Pending ⊕⊖</td><td>t2.micro</td><td>–</td><td class="bl">View alarms +</td><td>us-east-1c</td></tr></table></div>
<div class="a" style="left:63px;top:50px;width:312px;height:14px;background:#ececec"></div>
<div class="a t h" style="left:67px;top:72px;font-size:4.2px">Select an instance</div><div class="a t" style="left:355px;top:72px">⚙ ✕</div>
</div>
<div class="ft">▣ CloudShell &nbsp; Feedback<span>© 2024, Amazon Web Services, Inc. or its affiliates. &nbsp; Privacy &nbsp; Terms &nbsp; Cookie preferences</span></div>
</div>

<div class="w" style="left:1247px;top:450px;width:353px">
<div class="tb"><div class="d"></div><div class="tab"></div></div><div class="ad"><div class="u">us-east-1.console.aws.amazon.com/ec2-instance-connect/ssh?connType=standard&amp;instanceId=i-08094a451030a2989</div></div>
<div class="nv"><span class="aws">aws</span><span class="sv">▦ Services</span><span class="se" style="width:130px">Search</span><span class="ic">▣◈◎⚙</span><span class="rg">N. Virginia ▾ &nbsp; view-dev @ 9410-7702-8185 ▾</span></div>
<div class="fv"></div>
<div class="ct" style="background:#fff">
<div class="a blk" style="left:0;top:0;width:342px;height:148px">
<div class="a term" style="left:4px;top:1px">   ,     #_
   ~\_  ####_        Amazon Linux 2023
  ~~  \_#####\
  ~~     \###|
  ~~       \#/ ___   https://aws.amazon.com/linux/amazon-linux-2023
   ~~       V~' '-&gt;
    ~~~         /
      ~~._.   _/
         _/ _/
       _/m/'
[ec2-user@ip-172-31-25-63 ~]$ </div>
<div class="a" style="left:82px;top:60px;width:1px;height:5px;background:#aaa"></div></div>
<div class="a t" style="left:0;top:148px;width:353px;height:33px;background:#fff;padding:5px 5px"><span style="font-size:4.2px;color:#16191f">i-08094a451030a2989 (prod-1)</span><br><span style="font-size:3.2px">PublicIPs: 54.165.203.208 &nbsp; PrivateIPs: 172.31.25.63</span><span style="position:absolute;right:8px;top:4px">✕</span></div>
</div>
<div class="ft">▣ CloudShell &nbsp; Feedback<span>© 2024, Amazon Web Services, Inc. or its affiliates. &nbsp; Privacy &nbsp; Terms &nbsp; Cookie preferences</span></div>
</div>

<!-- ============ ROW 4 ============ -->
<div class="w" style="left:0;top:675px;width:375px">
<div class="tb"><div class="d"></div><div class="tab"></div></div><div class="ad"><div class="u">us-east-1.console.aws.amazon.com/ec2/home?region=us-east-1#Instances:instanceState=running</div></div>
<div class="nv"><span class="aws">aws</span><span class="sv">▦ Services</span><span class="se" style="width:130px">Search</span><span class="ic">▣◈◎⚙</span><span class="rg">N. Virginia ▾ &nbsp; misumaren ▾</span></div>
<div class="fv"><i class="o"></i>EC2<i class="g"></i>S3<i class="r"></i>IAM</div>
<div class="ct" style="background:#fff">
<div class="sb" style="width:62px"><div class="sbl2" style="left:4px;top:4px">EC2 Dashboard &nbsp; &nbsp; &nbsp; &nbsp; &nbsp; ✕<br>EC2 Global View<br>Events<br>Console-to-Code <span class="bl">Preview</span><br><b>▾ Instances</b><br><span class="bl">Instances</span><br>Instance Types<br>Launch Templates<br>Spot Requests<br>Savings Plans<br>Reserved Instances<br>Dedicated Hosts<br>Capacity Reservations<br><b>▾ Images</b><br>AMIs<br>AMI Catalog<br><b>▾ Elastic Block Store</b><br>Volumes<br>Snapshots<br>Lifecycle Manager<br><b>▾ Network &amp; Security</b></div></div>
<div class="p" style="left:63px;top:0;width:312px;height:48px">
<div class="a t h" style="left:4px;top:3px;font-size:4.4px">Instances <span style="font-weight:normal">(2)</span> <span class="bl" style="font-weight:normal">Info</span></div>
<div class="bt" style="left:140px;top:2px">⟳</div><div class="bt" style="left:155px;top:2px;color:#999;border-color:#ccc">Connect</div><div class="bt" style="left:180px;top:2px">Instance state ▾</div><div class="bt" style="left:222px;top:2px">Actions ▾</div><div class="ob" style="left:252px;top:2px">Launch instances ▾</div>
<div class="in" style="left:4px;top:12px;width:170px">Find Instance by attribute or tag (case-sensitive)</div><div class="in" style="left:178px;top:12px;width:25px;color:#333">All states ▾</div>
<div class="bt" style="left:4px;top:22px;font-weight:normal;border-color:#0972d3">Instance state = running ✕</div><div class="bt" style="left:69px;top:22px">Clear filters</div><div class="a t" style="left:280px;top:23px">‹ 1 › ⚙</div>
<table class="a" style="left:0;top:31px;width:312px"><tr class="hd" style="height:8px"><td>☐</td><td>Name ✎ ▾</td><td>Instance ID</td><td>Instance state ▾</td><td>Instance type ▾</td><td>Status check</td><td>Alarm status</td><td>Availability Zone ▾</td></tr>
<tr style="height:8px"><td>☐</td><td>dev-1</td><td class="lk">i-0356d5f6b6ab4d215267</td><td style="color:#1d8102">⊙ Running ⊕⊖</td><td>t2.micro</td><td style="color:#1d8102">⊙ 2/2 checks passed</td><td class="bl">View alarms +</td><td>us-east-1c</td></tr>
<tr style="height:8px"><td>☐</td><td>prod-1</td><td class="lk">i-08094a451030a2989</td><td style="color:#1d8102">⊙ Running ⊕⊖</td><td>t2.micro</td><td style="color:#1d8102">⊙ 2/2 checks passed</td><td class="bl">View alarms +</td><td>us-east-1c</td></tr></table></div>
<div class="a" style="left:63px;top:57px;width:312px;height:8px;background:#ececec"></div>
<div class="a t h" style="left:67px;top:85px;font-size:4.2px">Select an instance</div><div class="a t" style="left:355px;top:85px">⚙ ✕</div>
</div>
<div class="ft">▣ CloudShell &nbsp; Feedback<span>© 2024, Amazon Web Services, Inc. or its affiliates. &nbsp; Privacy &nbsp; Terms</span></div>
</div>

<div class="w" style="left:400px;top:675px;width:373px">
<div class="tb"><div class="d"></div><div class="tab"></div></div><div class="ad"><div class="u">us-east-1.console.aws.amazon.com/iam/home?region=us-east-1#/groups/details/developers?section=permissions</div></div>
<div class="nv"><span class="aws">aws</span><span class="sv">▦ Services</span><span class="se" style="width:130px">Search</span><span class="ic">▣◈◎⚙</span><span class="rg">Global ▾ &nbsp; misumaren ▾</span></div>
<div class="fv"><i class="o"></i>EC2<i class="g"></i>S3<i class="r"></i>IAM</div>
<div class="ct" style="background:#f4f4f4">
<div class="sb" style="width:69px"><div class="sbt" style="left:7px">Identity and Access<br>Management (IAM)</div><div class="sbs" style="left:7px">Search IAM</div><div class="sbl" style="left:7px">Dashboard<br><b>▾ Access management</b><br><span class="bl">User groups</span><br>Users<br>Roles<br>Policies<br>Identity providers<br>Account settings<br><b>▾ Access reports</b><br>Access Analyzer<br>&nbsp; External access<br>&nbsp; Unused access<br>&nbsp; Analyzer settings<br>Credential report<br>Organization activity<br>Service control policies</div></div>
<div class="a t" style="left:85px;top:3px;color:#666"><span class="lk">IAM</span> › <span class="lk">User groups</span> › developers</div>
<div class="a h" style="left:85px;top:13px;font-size:9px;font-weight:normal">developers <span class="bl" style="font-size:3.5px">Info</span></div>
<div class="bt" style="left:328px;top:16px">Delete</div>
<div class="p" style="left:85px;top:30px;width:265px;height:47px">
<div class="a t h" style="left:5px;top:6px;font-size:4.5px">Summary</div><div class="bt" style="left:245px;top:4px">Edit</div>
<div class="a t" style="left:5px;top:24px;color:#666">User group name<br><span style="color:#333">developers</span></div>
<div class="a t" style="left:95px;top:24px;color:#666">Creation time<br><span style="color:#333">July 05, 2024, 15:21 (UTC-05:00)</span></div>
<div class="a t" style="left:180px;top:24px;color:#666">ARN<br><span style="color:#333">▢ arn:aws:iam::941077028185:group/develo<br>pers</span></div></div>
<div class="a t" style="left:87px;top:98px;color:#555">Users (1) &nbsp; &nbsp; <span class="bl">Permissions</span> &nbsp; &nbsp; Access Advisor</div>
<div class="a" style="left:107px;top:105px;width:22px;height:1.5px;background:#0972d3"></div>
<div class="p" style="left:85px;top:114px;width:265px;height:70px">
<div class="a t h" style="left:5px;top:6px;font-size:4.5px">Permissions policies <span style="font-weight:normal">(2)</span> <span class="bl" style="font-weight:normal">Info</span></div>
<div class="a t" style="left:5px;top:12px;font-size:2.8px;color:#666">You can attach up to 10 managed policies.</div>
<div class="bt" style="left:150px;top:4px">⟳</div><div class="bt" style="left:164px;top:4px">Simulate ▢</div><div class="bt" style="left:193px;top:4px;color:#999;border-color:#ccc">Remove</div><div class="bt" style="left:218px;top:4px">Add permissions ▾</div>
<div class="a t" style="left:115px;top:18px">Filter by Type</div>
<div class="in" style="left:5px;top:24px;width:108px">Search</div><div class="in" style="left:115px;top:24px;width:50px;color:#333">All types &nbsp; &nbsp; &nbsp; &nbsp; ▾</div><div class="a t" style="left:235px;top:25px">‹ 1 › ⚙</div>
<table class="a" style="left:0;top:36px;width:265px"><tr class="hd" style="height:10px"><td style="width:12px">☐</td><td style="width:100px">Policy name ▢ &nbsp; &nbsp; &nbsp; &nbsp; &nbsp; ▴</td><td style="width:85px">Type ▾</td><td>Attached entities ▾</td></tr>
<tr style="height:10px"><td>☐</td><td class="lk">▤ AmazonEC2FullAccess</td><td>AWS managed</td><td class="lk">1</td></tr>
<tr style="height:10px"><td>☐</td><td class="lk">▤ EC2InstanceConnect</td><td>AWS managed</td><td class="lk">1</td></tr></table></div>
<div class="a" style="left:362px;top:0;width:11px;bottom:0;background:#fff"></div>
</div>
<div class="ft">▣ CloudShell &nbsp; Feedback<span>© 2024, Amazon Web Services, Inc. or its affiliates. &nbsp; Privacy &nbsp; Terms &nbsp; Cookie preferences</span></div>
</div>

<div class="w" style="left:806px;top:675px;width:369px">
<div class="tb"><div class="d"></div><div class="tab"></div></div><div class="ad"><div class="u">us-east-1.console.aws.amazon.com/iam/home?region=us-east-1#/policies/create</div></div>
<div class="nv"><span class="aws">aws</span><span class="sv">▦ Services</span><span class="se" style="width:130px">Search</span><span class="ic">▣◈◎⚙</span><span class="rg">Global ▾ &nbsp; misumaren ▾</span></div>
<div class="fv"><i class="o"></i>EC2<i class="g"></i>S3<i class="r"></i>IAM</div>
<div class="ct" style="background:#f4f4f4">
<div class="a" style="left:0;top:0;width:10px;bottom:0;background:#fff;font-size:4px;color:#555;padding:2px">≡</div>
<div class="a t" style="left:45px;top:3px;color:#666"><span class="lk">IAM</span> › <span class="lk">User groups</span> › <span class="lk">developers</span> › Create policy</div>
<div class="a t" style="left:14px;top:14px;font-size:3.2px;line-height:5px;color:#666">Step 1<br><b style="color:#16191f">Specify permissions</b><br><br>Step 2<br>Review and create</div>
<div class="a h" style="left:70px;top:13px;font-size:7.5px;font-weight:normal">Specify permissions <span class="bl" style="font-size:3.5px">Info</span></div>
<div class="a t" style="left:70px;top:24px;font-size:3.2px;color:#555">Add permissions by selecting services, actions, resources, and conditions. Build permission statements using the JSON editor.</div>
<div class="p" style="left:70px;top:32px;width:275px;height:150px">
<div class="a t h" style="left:5px;top:6px;font-size:4.4px">Policy editor</div>
<div class="a t" style="left:183px;top:5px"><span style="background:#0972d3;color:#fff;padding:1px 4px;border-radius:2px">Visual</span> <span style="border:1px solid #888;padding:1px 4px">JSON</span> &nbsp;<span style="border:1px solid #888;padding:1px 4px">Actions ▾</span> <span style="border:1px solid #888;padding:1px 2px">▦</span></div>
<div class="a" style="left:0;top:18px;right:0;height:1px;background:#ddd"></div>
<div class="a t h" style="left:5px;top:23px;font-size:4px">▾ EC2 Instance Connect</div><div class="a t" style="left:225px;top:22px">⧉ &nbsp; 🗑︎</div>
<div class="a t" style="left:8px;top:30px;font-size:3px;color:#666">Specify what actions can be performed on specific resources in EC2 Instance Connect.</div>
<div class="a t h" style="left:10px;top:38px;font-size:3.4px">▾ Actions allowed</div>
<div class="a t" style="left:13px;top:45px;font-size:3px;color:#666">Specify actions from the service to be allowed.</div>
<div class="in" style="left:13px;top:50px;width:90px">Filter Actions</div>
<div class="a t" style="left:165px;top:44px;font-size:3.2px">Effect<br>◉ Allow &nbsp; ○ Deny</div>
<div class="a t" style="left:13px;top:63px;font-size:3.2px;line-height:5px">Manual actions | <span class="bl">Add actions</span><br>☐ All EC2 Instance Connect actions (ec2-instance-connect:*)<br><br>Access level &nbsp; &nbsp; &nbsp; &nbsp; &nbsp; &nbsp; &nbsp; &nbsp; &nbsp; &nbsp; &nbsp; &nbsp; &nbsp; &nbsp; &nbsp; &nbsp; &nbsp; &nbsp; &nbsp; &nbsp; &nbsp; &nbsp; &nbsp; &nbsp; &nbsp; &nbsp; &nbsp; &nbsp; &nbsp; &nbsp; <span class="bl">Expand all | Collapse all</span><br>▸ Write (2)</div>
<div class="a t h" style="left:10px;top:100px;font-size:3.4px">▸ Resources</div>
</div></div>
<div class="ft">▣ CloudShell &nbsp; Feedback<span>© 2024, Amazon Web Services, Inc. or its affiliates. &nbsp; Privacy &nbsp; Terms</span></div>
</div>

<div class="w" style="left:1200px;top:675px;width:372px">
<div class="tb"><div class="d"></div><div class="tab"></div></div><div class="ad"><div class="u">us-east-1.console.aws.amazon.com/iam/home?region=us-east-1#/policies/create</div></div>
<div class="nv"><span class="aws">aws</span><span class="sv">▦ Services</span><span class="se" style="width:130px">Search</span><span class="ic">▣◈◎⚙</span><span class="rg">Global ▾ &nbsp; misumaren ▾</span></div>
<div class="fv"><i class="o"></i>EC2<i class="g"></i>S3<i class="r"></i>IAM</div>
<div class="ct" style="background:#f4f4f4">
<div class="a" style="left:0;top:0;width:10px;bottom:0;background:#fff;font-size:4px;color:#555;padding:2px">≡</div>
<div class="a t" style="left:94px;top:4px;width:258px;height:21px;background:#f0f6fd;border:1px solid #b6d2f0;font-size:3.2px;padding:3px 4px;line-height:5.5px">ⓘ This policy defines some actions, resources, or conditions that do not provide permissions. To grant access, policies must have an action that has<br>&nbsp; an applicable resource or condition. For details, choose <b>Show remaining.</b> <span class="lk">Learn more</span></div>
<div class="p" style="left:94px;top:30px;width:258px;height:127px">
<div class="a t h" style="left:5px;top:5px;font-size:4.3px">Permissions defined in this policy <span class="bl" style="font-weight:normal">Info</span></div><div class="bt" style="left:236px;top:3px">Edit</div>
<div class="a t" style="left:5px;top:11px;font-size:2.7px;color:#666">Permissions defined in this policy document specify which actions are allowed or denied. To define permissions for an IAM identity (user, user group, or role), attach a policy to it.</div>
<div class="in" style="left:5px;top:20px;width:170px">Search</div>
<div class="a t h" style="left:5px;top:31px;font-size:3.8px">Explicit deny (1 of 419 services)</div>
<table class="a" style="left:0;top:40px;width:258px"><tr class="hd" style="height:10px;background:#fafafa"><td style="width:60px">Service &nbsp; &nbsp; &nbsp; &nbsp; &nbsp; ▴</td><td style="width:65px">Access level &nbsp; &nbsp; &nbsp; &nbsp; ▾</td><td style="width:65px">Resource</td><td>Request condition</td></tr>
<tr style="height:22px"><td class="lk">EC2 Instance Connect</td><td>Limited: Write</td><td style="line-height:4.5px">InstanceID string like (i-<br>08094a451030a2989, region)<br>string like (us-east-1</td><td>None</td></tr></table>
<div class="a" style="left:0;right:0;top:73px;height:2px;background:#777"></div>
<div class="a t h" style="left:5px;top:81px;font-size:3.8px">Allow (0 of 419 services)</div><div class="a t" style="left:195px;top:81px;font-size:3px">◐ Show remaining 418 services</div>
<table class="a" style="left:0;top:89px;width:258px"><tr class="hd" style="height:10px;background:#fafafa"><td style="width:60px">Service &nbsp; &nbsp; &nbsp; &nbsp; &nbsp; ▴</td><td style="width:65px">Access level &nbsp; &nbsp; &nbsp; &nbsp; ▾</td><td style="width:65px">Resource</td><td>Request condition</td></tr></table>
<div class="a t" style="left:110px;top:103px;font-size:3.2px">No resources to display</div>
</div>
<div class="a t" style="left:265px;top:164px">Cancel</div><div class="bt" style="left:288px;top:161px">Previous</div><div class="ob" style="left:318px;top:161px">Create policy</div>
<div class="a" style="left:362px;top:0;width:10px;bottom:0;background:#fff"></div>
</div>
<div class="ft">▣ CloudShell &nbsp; Feedback<span>© 2024, Amazon Web Services, Inc. or its affiliates. &nbsp; Privacy &nbsp; Terms &nbsp; Cookie preferences</span></div>
</div>

</body></html>
